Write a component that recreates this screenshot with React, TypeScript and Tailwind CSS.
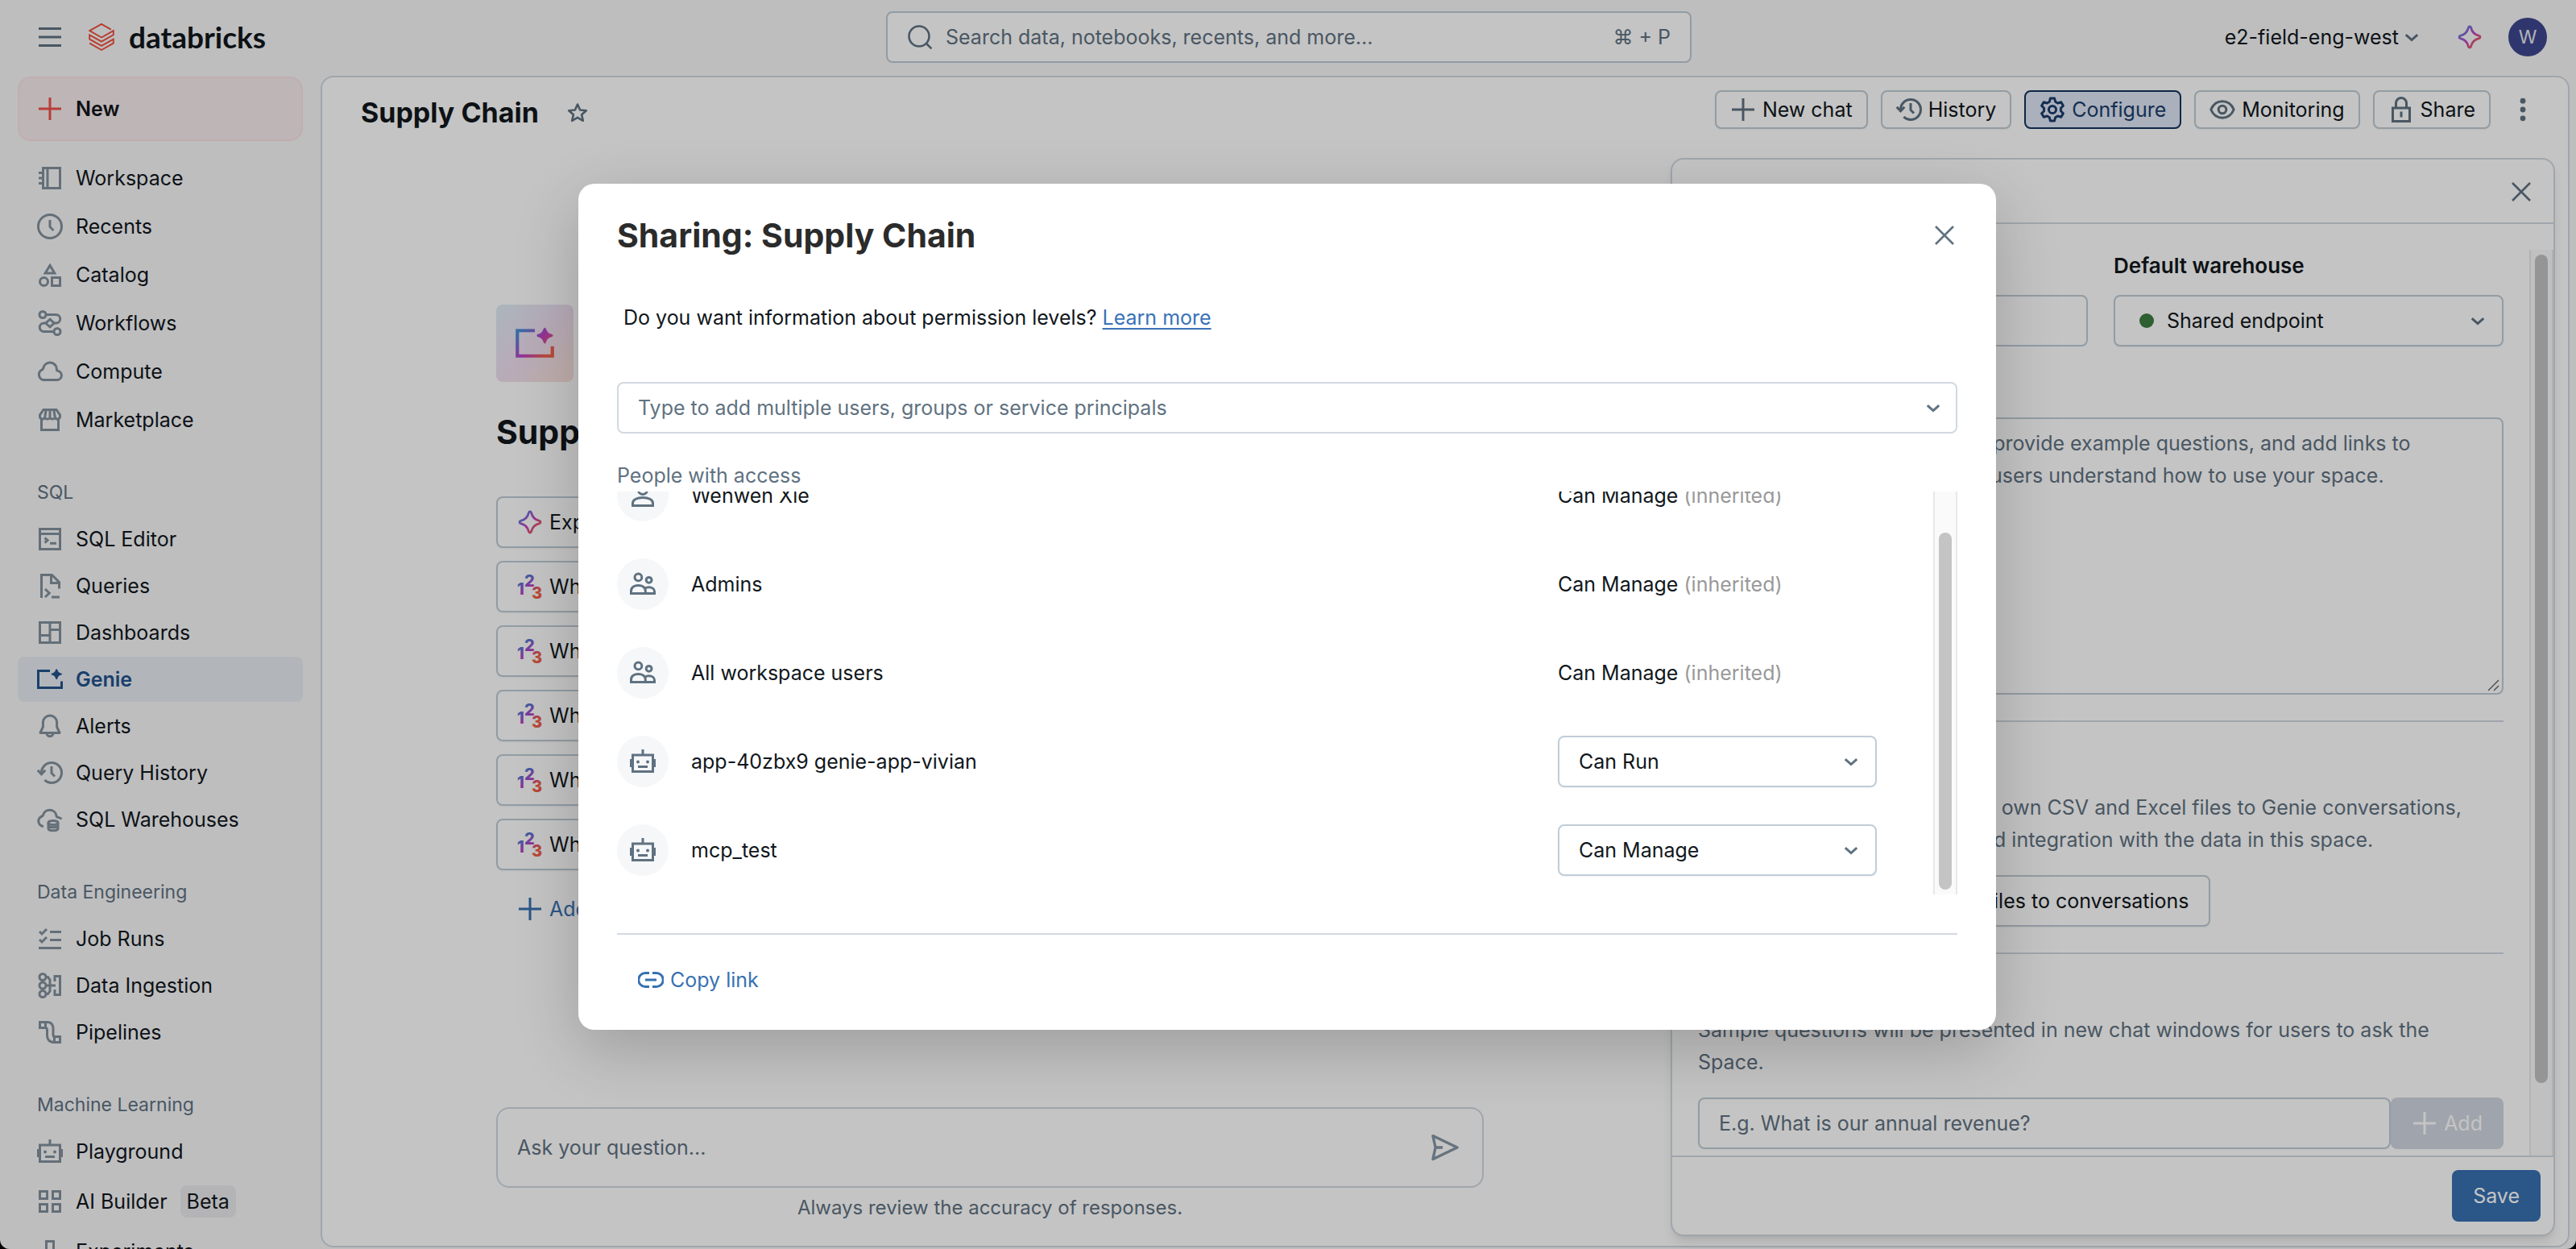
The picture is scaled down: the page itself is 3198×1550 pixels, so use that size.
import type { ReactNode } from "react";

/* ---------- icons ---------- */

function Icon({ children, className = "size-8" }: { children: ReactNode; className?: string }) {
  return (
    <svg viewBox="0 0 16 16" fill="none" stroke="currentColor" strokeWidth="1.5" className={`shrink-0 ${className}`} aria-hidden>
      {children}
    </svg>
  );
}

const icons = {
  menu: <path d="M1 2.75h14M1 8h14M1 13.25h14" />,
  plus: <path d="M8 1v14M1 8h14" />,
  close: <path d="M2.5 2.5l11 11M13.5 2.5l-11 11" strokeWidth="1.3" />,
  chevron: <path d="M4.4 6.6L8 9.8l3.6-3.2" strokeWidth="1.5" />,
  workspace: (
    <>
      <path d="M3.75 1.75h10.5v12.5H3.75zM6.5 1.75v12.5" />
      <path d="M1 4.75h2.75M1 8h2.75M1 11.25h2.75" />
    </>
  ),
  clock: (
    <>
      <circle cx="8" cy="8" r="7.25" />
      <path d="M8 4v4.25L10.25 10.5" />
    </>
  ),
  catalog: (
    <>
      <path d="M8 2.2L10.9 7H5.1z" />
      <circle cx="4.25" cy="12.25" r="2.5" />
      <path d="M9.25 9.75h5v5h-5z" />
    </>
  ),
  workflows: (
    <>
      <circle cx="3.5" cy="2.75" r="2" />
      <circle cx="12.5" cy="13.25" r="2" />
      <path d="M5.5 2.75h6.25a2.6 2.6 0 010 5.25H10.4M10.5 13.25H4.25a2.6 2.6 0 010-5.25h1.4" />
      <path d="M8 5.6L10.6 8 8 10.4 5.4 8z" />
    </>
  ),
  cloud: <path d="M3.8 13.25h8.6a2.85 2.85 0 00.3-5.68.6.6 0 01-.5-.6V6.4a4.2 4.2 0 00-8.3-.6c-.1.5-.4.9-.8 1.1a3.4 3.4 0 00.7 6.35z" />,
  market: (
    <>
      <path d="M2.75 7.5v6.75h10.5V7.5" />
      <path d="M4 1.75h8L14.25 5v1a1.6 1.6 0 01-3.1.5A1.7 1.7 0 018 6.5a1.7 1.7 0 01-3.15 0A1.6 1.6 0 011.75 6V5zM5.6 1.75L4.85 6.5M8 1.75V6.5M10.4 1.75l.75 4.75" />
    </>
  ),
  sqlEditor: (
    <>
      <path d="M1.75 1.75h12.5v12.5H1.75zM1.75 4.75h12.5" />
      <path d="M4.75 7.25l1.75 1.5-1.75 1.5M8 10.6h4" />
    </>
  ),
  queries: (
    <>
      <path d="M2.75 15.5V1.25h6.5l4.5 4.5v4M8.75 1.25v5h5" />
      <path d="M5 10l2.6 2.5L5 15M9 15h5" />
    </>
  ),
  dashboards: (
    <>
      <path d="M1.75 1.75h12.5v12.5H1.75zM8 1.75v12.5" />
      <path d="M1.75 9.75H8M8 6.25h6.25" />
    </>
  ),
  genie: (
    <>
      <path d="M8 2.75H.75v10.5h14.5v-4" />
      <path
        d="M12.1 1.6c.3 0 .45.2.55.5.35 1.2.9 1.75 2.1 2.1.3.1.75.2.75.6s-.45.5-.75.6c-1.2.35-1.75.9-2.1 2.1-.1.3-.25.6-.55.6s-.45-.3-.55-.6c-.35-1.2-.9-1.75-2.1-2.1-.3-.1-.65-.2-.65-.6s.35-.5.65-.6c1.2-.35 1.75-.9 2.1-2.1.1-.3.25-.5.55-.5z"
        fill="currentColor"
        stroke="none"
      />
    </>
  ),
  bell: (
    <>
      <path d="M8 1.5a4.3 4.3 0 00-4.3 4.3v2.7L2 12.2h12l-1.7-3.7V5.8A4.3 4.3 0 008 1.5z" strokeLinejoin="round" />
      <path d="M6 12.4a2 2 0 004 0" />
    </>
  ),
  history: (
    <>
      <path d="M2.75 8A6.25 6.25 0 119 14.25a6.2 6.2 0 01-4.3-1.75" />
      <path d="M.4 6.4L2.75 8.9l2.4-2.5M9 4v4.25l2 2" />
    </>
  ),
  warehouse: (
    <>
      <path d="M4 12.2A3.2 3.2 0 013 6c.4-.1.7-.4.8-.8a4.2 4.2 0 018.2.4c0 .6.3.9.9 1 .9.1 1.7.5 2.3 1.2" />
      <ellipse cx="10" cy="10" rx="3" ry="1.3" />
      <path d="M7 10v3.5c0 .8 1.3 1.4 3 1.4s3-.6 3-1.4V10M7 12c.4.5 1.6.9 3 .9s2.6-.4 3-.9" />
    </>
  ),
  jobs: (
    <>
      <path d="M8 3.75h7M8 8.75h7M1 13.75h14" />
      <path d="M1.5 3.5L3 5l3-3M1.5 8.5L3 10l3-3" />
    </>
  ),
  ingestion: (
    <>
      <circle cx="3.5" cy="2.75" r="2" />
      <circle cx="3.5" cy="8" r="2" />
      <circle cx="3.5" cy="13.25" r="2" />
      <path d="M5.5 2.75h1.25L8 4.5v7l-1.25 1.75H5.5M5.5 8h6M11 5.5V2.25h3.25v11.5H11V10.5" />
    </>
  ),
  pipelines: (
    <>
      <path d="M1.75 1.75h3.5v3.5h-3.5zM10.75 10.75h3.5v3.5h-3.5z" />
      <path d="M5.25 1.75H6.5c2.5 0 3.5 2 3.5 4v3.5c0 1 .2 1.5.75 1.5M5.25 5.25c.6 0 1 .5 1 1.5V10c0 2.5 1.5 4.25 4.5 4.25" />
    </>
  ),
  robot: (
    <>
      <path d="M1.75 4h12.5v10.25H1.75zM8 .5V4" />
      <path d="M.75 6.5v5M15.25 6.5v5M5 11.25h6" />
      <circle cx="5" cy="8.2" r="1" fill="currentColor" stroke="none" />
      <circle cx="11" cy="8.2" r="1" fill="currentColor" stroke="none" />
    </>
  ),
  grid: <path d="M1.75 1.75h4.5v4.5h-4.5zM9.75 1.75h4.5v4.5h-4.5zM1.75 9.75h4.5v4.5h-4.5zM9.75 9.75h4.5v4.5h-4.5z" />,
  beaker: <path d="M5.75 1.75h4.5v5l4 7.5H1.75l4-7.5z" />,
  search: (
    <>
      <circle cx="7.5" cy="7.5" r="6.25" strokeWidth="1.3" />
      <path d="M12 12l3.2 3.2" strokeWidth="1.3" />
    </>
  ),
  star: <path d="M8 2l1.8 4 4.4.4-3.3 2.9 1 4.3L8 11.3l-3.9 2.3 1-4.3-3.3-2.9L6.2 6z" strokeLinejoin="round" />,
  gear: (
    <>
      <path
        d="M6.7 1h2.6l.5 2.1 1.5.9 2.1-.6 1.3 2.2-1.5 1.5v1.8l1.5 1.5-1.3 2.2-2.1-.6-1.5.9-.5 2.1H6.7l-.5-2.1-1.5-.9-2.1.6-1.3-2.2 1.5-1.5V7.1L1.3 5.6l1.3-2.2 2.1.6 1.5-.9z"
        strokeLinejoin="round"
      />
      <circle cx="8" cy="8" r="2.3" />
    </>
  ),
  eye: (
    <>
      <path d="M.9 8C2.3 4.7 5 2.9 8 2.9S13.7 4.7 15.1 8C13.7 11.3 11 13.1 8 13.1S2.3 11.3.9 8z" strokeLinejoin="round" />
      <circle cx="8" cy="8" r="2.4" />
    </>
  ),
  lock: (
    <>
      <path d="M2.75 7h10.5v8.25H2.75zM4.75 7V4a3.25 3.25 0 016.5 0v3" />
      <path d="M8 9.25v3.5" />
    </>
  ),
  kebab: (
    <g fill="currentColor" stroke="none">
      <circle cx="8" cy="2.6" r="1.7" />
      <circle cx="8" cy="8" r="1.7" />
      <circle cx="8" cy="13.4" r="1.7" />
    </g>
  ),
  send: <path d="M1.3 1.6L14.7 8 1.3 14.4 2.7 8zM2.7 8h4" strokeLinejoin="round" strokeWidth="1.5" />,
  link: (
    <>
      <path d="M7 3.75H4.6a4.25 4.25 0 000 8.5H7M9 3.75h2.4a4.25 4.25 0 010 8.5H9" />
      <path d="M4.5 8h7" />
    </>
  ),
  user: (
    <>
      <circle cx="8" cy="4.5" r="2.75" />
      <path d="M1.75 14.25v-1.5C1.75 10.5 4.6 9.2 8 9.2s6.25 1.3 6.25 3.55v1.5z" />
    </>
  ),
  users: (
    <>
      <circle cx="5.2" cy="3.7" r="2.2" />
      <circle cx="11.8" cy="5.4" r="1.7" />
      <path d="M.75 13.75v-1.5C.75 10 2.7 8.7 5.2 8.7s4.45 1.3 4.45 3.55v1.5zM9.5 13.75h5.75v-1.2c0-1.7-1.6-2.7-3.45-2.7-1 0-1.9.3-2.5.8" />
    </>
  ),
};

type IconName = keyof typeof icons;

function Gradients() {
  return (
    <svg width="0" height="0" className="absolute" aria-hidden>
      <defs>
        <linearGradient id="ai16" gradientUnits="userSpaceOnUse" x1="1" y1="1" x2="15" y2="15">
          <stop offset="0.1" stopColor="#4a90d9" />
          <stop offset="0.5" stopColor="#c042c8" />
          <stop offset="0.85" stopColor="#f0604a" />
        </linearGradient>
        <linearGradient id="ai32" gradientUnits="userSpaceOnUse" x1="4" y1="2" x2="28" y2="30">
          <stop offset="0.15" stopColor="#4a7fd0" />
          <stop offset="0.5" stopColor="#b83fc8" />
          <stop offset="0.75" stopColor="#f0604a" />
        </linearGradient>
      </defs>
    </svg>
  );
}

function Sparkle({ className = "size-8" }: { className?: string }) {
  return (
    <svg viewBox="0 0 16 16" fill="none" stroke="url(#ai16)" strokeWidth="1.4" strokeLinejoin="round" className={`shrink-0 ${className}`} aria-hidden>
      <path d="M8 1.5c.5 0 .7.3.8.7.7 2.9 2.1 4.3 5 5 .4.1.7.3.7.8s-.3.7-.7.8c-2.9.7-4.3 2.1-5 5-.1.4-.3.7-.8.7s-.7-.3-.8-.7c-.7-2.9-2.1-4.3-5-5-.4-.1-.7-.3-.7-.8s.3-.7.7-.8c2.9-.7 4.3-2.1 5-5 .1-.4.3-.7.8-.7z" />
    </svg>
  );
}

function Numbers() {
  return (
    <svg viewBox="0 0 32 32" fill="url(#ai32)" className="size-8 shrink-0 overflow-visible font-['Inter',sans-serif] text-[20px] font-extrabold" aria-hidden>
      <text x="0" y="26">1</text>
      <text x="9" y="16">2</text>
      <text x="18" y="31">3</text>
    </svg>
  );
}

function Logo() {
  return (
    <svg viewBox="0 0 32 35" fill="none" stroke="#ef4d3a" strokeWidth="1.9" className="h-9 w-8 shrink-0" aria-hidden>
      <path d="M1.2 25.2L16 33.5l14.8-8.3v-5.1L16 28.4 1.2 20.1v-5.3L16 23.1l14.8-8.3V9.7L16 18 1.2 9.7 16 1.4l11.8 6.7" />
    </svg>
  );
}

/* ---------- sidebar ---------- */

type NavEntry = { label: string; icon: IconName; active?: boolean; badge?: string };

const topNav: NavEntry[] = [
  { label: "Workspace", icon: "workspace" },
  { label: "Recents", icon: "clock" },
  { label: "Catalog", icon: "catalog" },
  { label: "Workflows", icon: "workflows" },
  { label: "Compute", icon: "cloud" },
  { label: "Marketplace", icon: "market" },
];

const sections: { title: string; items: NavEntry[] }[] = [
  {
    title: "SQL",
    items: [
      { label: "SQL Editor", icon: "sqlEditor" },
      { label: "Queries", icon: "queries" },
      { label: "Dashboards", icon: "dashboards" },
      { label: "Genie", icon: "genie", active: true },
      { label: "Alerts", icon: "bell" },
      { label: "Query History", icon: "history" },
      { label: "SQL Warehouses", icon: "warehouse" },
    ],
  },
  {
    title: "Data Engineering",
    items: [
      { label: "Job Runs", icon: "jobs" },
      { label: "Data Ingestion", icon: "ingestion" },
      { label: "Pipelines", icon: "pipelines" },
    ],
  },
  {
    title: "Machine Learning",
    items: [
      { label: "Playground", icon: "robot" },
      { label: "AI Builder", icon: "grid", badge: "Beta" },
      { label: "Experiments", icon: "beaker" },
    ],
  },
];

function NavLink({ entry }: { entry: NavEntry }) {
  return (
    <a
      href="#"
      className={`flex shrink-0 items-center gap-4 rounded-lg pl-6 ${entry.badge ? "h-16" : "h-14"} ${
        entry.active ? "bg-[#e8edf4] font-semibold text-[#23528c]" : ""
      }`}
    >
      <Icon className={entry.active ? "size-8" : "size-8 text-[#83919c]"}>{icons[entry.icon]}</Icon>
      <span>{entry.label}</span>
      {entry.badge && <span className="rounded-lg bg-[#ebebed] px-2 py-1 leading-8">{entry.badge}</span>}
    </a>
  );
}

function Sidebar() {
  return (
    <nav className="flex w-[398px] shrink-0 flex-col overflow-hidden px-[22px] pt-px" aria-label="Primary">
      <button className="flex h-20 shrink-0 items-center gap-4 rounded-2xl border-2 border-[#fae3e4] bg-[#f8eced] pl-[22px] font-semibold">
        <Icon className="size-8 text-[#f0504a]">{icons.plus}</Icon>
        New
      </button>
      <div className="mt-[18px] flex shrink-0 flex-col gap-1">
        {topNav.map((e) => (
          <NavLink key={e.label} entry={e} />
        ))}
      </div>
      {sections.map((s) => (
        <section key={s.title} className="mt-8 flex shrink-0 flex-col">
          <h2 className="flex h-15 items-center pl-6 text-[23px] text-[#5f7281]">{s.title}</h2>
          <div className="flex flex-col gap-0.5">
            {s.items.map((e) => (
              <NavLink key={e.label} entry={e} />
            ))}
          </div>
        </section>
      ))}
    </nav>
  );
}

/* ---------- top bar ---------- */

function TopBar() {
  return (
    <header className="grid h-[94px] shrink-0 grid-cols-[1fr_1000px_1fr] items-center pb-0.5 pl-0.5">
      <div className="flex items-center gap-8 pl-11">
        <button aria-label="Toggle navigation">
          <Icon className="size-8 text-[#5f7281]">{icons.menu}</Icon>
        </button>
        <a href="#" className="flex items-center gap-[18px] font-['Lato',sans-serif] text-[37px] leading-10 font-bold">
          <Logo />
          databricks
        </a>
      </div>
      <label className="flex h-16 items-center gap-4 rounded-lg border-2 border-[#bfccd6] bg-white px-6 text-[#5f7281]">
        <Icon>{icons.search}</Icon>
        <input
          type="search"
          aria-label="Search"
          placeholder="Search data, notebooks, recents, and more..."
          className="min-w-0 flex-1 bg-transparent outline-none placeholder:text-[#5f7281]"
        />
        <kbd className="font-['Inter','DejaVu_Sans',sans-serif]">⌘ + P</kbd>
      </label>
      <div className="flex items-center justify-end pr-9">
        <button className="flex items-center">
          e2-field-eng-west
          <Icon className="size-8 text-[#5f7281]">{icons.chevron}</Icon>
        </button>
        <button aria-label="Assistant" className="ml-10">
          <Sparkle />
        </button>
        <button className="ml-8 size-12 rounded-full bg-[#3e478e] text-[23px] text-[#e8e8f0]">W</button>
      </div>
    </header>
  );
}

/* ---------- Genie space ---------- */

const toolbar: { label: string; icon: IconName; active?: boolean }[] = [
  { label: "New chat", icon: "plus" },
  { label: "History", icon: "history" },
  { label: "Configure", icon: "gear", active: true },
  { label: "Monitoring", icon: "eye" },
  { label: "Share", icon: "lock" },
];

function SpaceHeader() {
  return (
    <div className="flex h-[100px] shrink-0 justify-between pt-4 pr-8 pl-12">
      <div className="flex h-14 items-center gap-[34px]">
        <h1 className="text-[34px] font-bold">Supply Chain</h1>
        <button aria-label="Add to favorites">
          <Icon className="size-7 text-[#5f7281]">{icons.star}</Icon>
        </button>
      </div>
      <div className="flex gap-4">
        {toolbar.map((b) => (
          <button
            key={b.label}
            className={`flex h-12 items-center gap-2 rounded-lg border-2 px-[17px] ${
              b.active ? "border-[#13335c] bg-[#dde6f5] text-[#1b3d6a]" : "border-[#bfccd6] bg-white shadow-xs"
            }`}
          >
            <Icon className={b.active ? "size-8" : "size-8 text-[#5f7281]"}>{icons[b.icon]}</Icon>
            {b.label}
          </button>
        ))}
        <button aria-label="More actions" className="flex h-12 w-12 items-center justify-center">
          <Icon className="size-8 text-[#5f7281]">{icons.kebab}</Icon>
        </button>
      </div>
    </div>
  );
}

const suggestions = [
  "Explain the data set",
  "What is the total inventory by plant?",
  "What are the top products by demand?",
  "What is the average lead time by supplier?",
  "What is the shipping cost by region?",
  "What orders are delayed this week?",
];

function ChatArea() {
  return (
    <div className="mx-auto flex w-full max-w-[1226px] flex-col pt-[182px]">
      <div className="flex size-24 items-center justify-center rounded-lg bg-linear-to-br from-[#dfecf5] via-[#efdff0] to-[#fbe2da]">
        <svg viewBox="0 0 16 16" fill="none" stroke="url(#ai16)" strokeWidth="1.4" className="size-12 [&>path:last-child]:fill-[url(#ai16)]" aria-hidden>
          {icons.genie.props.children}
        </svg>
      </div>
      <h2 className="mt-8 text-[41px] leading-[60px] font-bold">Supply Chain</h2>
      <div className="mt-[50px] flex flex-col items-start gap-4">
        {suggestions.map((s, i) => (
          <button key={s} className="flex h-16 items-center gap-2 rounded-lg border-2 border-[#bfccd6] px-6 shadow-xs">
            {i === 0 ? <Sparkle /> : <Numbers />}
            {s}
          </button>
        ))}
        <button className="flex h-16 items-center gap-2 px-[26px] text-[#3771b1]">
          <Icon>{icons.plus}</Icon>
          Add a question
        </button>
      </div>
      <div className="mt-auto flex h-[100px] shrink-0 items-center rounded-2xl border-2 border-[#d1d9e1] pr-7 pl-6">
        <input
          aria-label="Ask your question"
          placeholder="Ask your question..."
          className="min-w-0 flex-1 bg-transparent outline-none placeholder:text-[#5f7281]"
        />
        <button aria-label="Send">
          <Icon className="size-9 text-[#8796a5]">{icons.send}</Icon>
        </button>
      </div>
      <p className="mt-2.5 mb-8 text-center text-[24px] leading-[30px] text-[#5f7281]">Always review the accuracy of responses.</p>
    </div>
  );
}

/* ---------- configuration panel ---------- */

const field = "h-16 w-full rounded-lg border-2 border-[#bfccd6] bg-white px-6 outline-none placeholder:text-[#5f7281]";

function ConfigPanel() {
  return (
    <aside className="mr-4 mb-3 flex w-[1098px] shrink-0 flex-col overflow-hidden rounded-2xl border-2 border-[#d1d9e1] bg-white shadow-lg">
      <div className="flex h-20 shrink-0 items-center justify-between border-b-2 border-[#d1d9e1] pt-0.5 pr-6 pl-8">
        <h2 className="pt-2 text-[26px] font-semibold">Settings</h2>
        <button aria-label="Close settings">
          <Icon className="size-8 text-[#5f7281]">{icons.close}</Icon>
        </button>
      </div>
      <div className="mt-8 flex min-h-0 flex-1">
        <div className="flex min-w-0 flex-1 flex-col overflow-hidden px-8">
          <div className="grid shrink-0 grid-cols-2 gap-8">
            <div>
              <label htmlFor="title" className="block text-[26px] leading-10 font-semibold">Title</label>
              <input id="title" defaultValue="Supply Chain" className={`mt-4 ${field}`} />
            </div>
            <div>
              <label htmlFor="warehouse" className="block text-[26px] leading-10 font-semibold">Default warehouse</label>
              <div className="relative mt-4">
                <select id="warehouse" className="h-16 w-full appearance-none rounded-lg border-2 border-[#bfccd6] bg-white pl-16 shadow-xs outline-none">
                  <option>Shared endpoint</option>
                </select>
                <span className="absolute top-[23px] left-8 size-[18px] rounded-full bg-[#3c7d41]" />
                <Icon className="pointer-events-none absolute top-4 right-4 size-8 text-[#5f7281]">{icons.chevron}</Icon>
              </div>
            </div>
          </div>
          <label htmlFor="description" className="mt-8 block shrink-0 text-[26px] leading-10 font-semibold">Description</label>
          <div className="relative mt-4 h-[344px] shrink-0">
            <textarea
              id="description"
              placeholder={"Give an overview of all data, provide example questions, and add links to\ndocumentation to help most users understand how to use your space."}
              className="block h-full w-full resize-none rounded-lg border-2 border-[#bfccd6] px-6 py-2.5 leading-10 outline-none placeholder:text-[#5f7281]"
            />
            <svg viewBox="0 0 16 16" className="absolute right-1 bottom-1 size-4" stroke="#6b6b6b" strokeWidth="1.5" aria-hidden>
              <path d="M1 15L14 2M8 15l6-6" />
            </svg>
          </div>
          <hr className="mt-8 shrink-0 border-t-2 border-[#d1d9e1]" />
          <h3 className="mt-8 shrink-0 text-[26px] leading-10 font-semibold">File uploads</h3>
          <p className="mt-3.5 shrink-0 leading-10 whitespace-pre text-[#5f7281]">
            {"Let users upload and view their own CSV and Excel files to Genie conversations,\nfor any ad hoc data analysis and integration with the data in this space."}
          </p>
          <button className="mt-6 h-16 shrink-0 self-start rounded-lg border-2 border-[#bfccd6] px-6 shadow-xs">
            Allow users to try or upload files to conversations
          </button>
          <hr className="mt-8 shrink-0 border-t-2 border-[#d1d9e1]" />
          <h3 className="mt-6 shrink-0 text-[26px] leading-10 font-semibold">Sample questions</h3>
          <p className="mt-2.5 shrink-0 leading-10 text-[#5f7281]">
            Sample questions will be presented in new chat windows for users to ask the
            <br />
            Space.
          </p>
          <div className="mt-6 flex shrink-0">
            <input aria-label="Sample question" placeholder="E.g. What is our annual revenue?" className={field} />
            <button disabled className="flex h-16 shrink-0 items-center gap-2 rounded-lg bg-[#d1d6e0] px-[26px] text-white">
              <Icon>{icons.plus}</Icon>
              Add
            </button>
          </div>
        </div>
        <div className="w-[30px] shrink-0 border-x-2 border-[#e8e8e8] bg-[#fafafa] pt-1.5">
          <div className="mx-auto h-[1028px] w-4 rounded-full bg-[#c2c2c2]" />
        </div>
      </div>
      <div className="flex h-[98px] shrink-0 justify-end border-t-2 border-[#d1d9e1] pt-4 pr-4">
        <button className="h-16 rounded-lg bg-[#3771b1] px-[26px] text-white">Save</button>
      </div>
    </aside>
  );
}

/* ---------- sharing dialog ---------- */

type Member = { name: string; icon: IconName; level: string; editable?: boolean };

const members: Member[] = [
  { name: "Wenwen Xie", icon: "user", level: "Can Manage" },
  { name: "Admins", icon: "users", level: "Can Manage" },
  { name: "All workspace users", icon: "users", level: "Can Manage" },
  { name: "app-40zbx9 genie-app-vivian", icon: "robot", level: "Can Run", editable: true },
  { name: "mcp_test", icon: "robot", level: "Can Manage", editable: true },
];

function MemberRow({ m }: { m: Member }) {
  return (
    <li className="flex h-[110px] shrink-0 items-center">
      <span className="flex size-16 shrink-0 items-center justify-center rounded-full bg-[#f6f7f9] text-[#5f7281]">
        <Icon>{icons[m.icon]}</Icon>
      </span>
      <span className="ml-7 flex-1">{m.name}</span>
      <div className="mr-[70px] w-[396px]">
        {m.editable ? (
          <div className="relative">
            <select
              aria-label={`Permission for ${m.name}`}
              defaultValue={m.level}
              className="h-16 w-full appearance-none rounded-lg border-2 border-[#c0cdd8] bg-white pl-6 shadow-xs outline-none"
            >
              <option>Can Manage</option>
              <option>Can Edit</option>
              <option>Can Run</option>
              <option>Can View</option>
            </select>
            <Icon className="pointer-events-none absolute top-4 right-4 size-8 text-[#5f7281]">{icons.chevron}</Icon>
          </div>
        ) : (
          <p>
            {m.level} <span className="text-[#999999]">(inherited)</span>
          </p>
        )}
      </div>
    </li>
  );
}

function SharingDialog() {
  return (
    <div className="absolute inset-0 flex items-start justify-center bg-black/23 pt-[228px] pr-0.5">
      <div
        role="dialog"
        aria-modal="true"
        aria-labelledby="sharing-title"
        className="flex w-[1760px] flex-col rounded-[20px] bg-white px-12 pt-8 pb-[30px] shadow-[0_24px_80px_rgba(0,0,0,0.2)]"
      >
        <div className="flex h-16 items-center justify-between">
          <h2 id="sharing-title" className="text-[41px] font-bold text-[#2b2b2b]">
            Sharing: Supply Chain
          </h2>
          <button aria-label="Close">
            <Icon className="size-8 text-[#5f7281]">{icons.close}</Icon>
          </button>
        </div>
        <p className="mt-[50px] ml-2 leading-10">
          Do you want information about permission levels?{" "}
          <a href="#" className="text-[#3a72b8] underline decoration-2 underline-offset-4">
            Learn more
          </a>
        </p>
        <div className="relative mt-15">
          <input
            role="combobox"
            aria-expanded="false"
            aria-label="Add users, groups or service principals"
            placeholder="Type to add multiple users, groups or service principals"
            className="h-16 w-full rounded-lg border-2 border-[#d1d9e1] px-6 outline-none placeholder:text-[#5f7281]"
          />
          <Icon className="pointer-events-none absolute top-4 right-3.5 size-8 text-[#5f7281]">{icons.chevron}</Icon>
        </div>
        <h3 className="mt-8 leading-10 text-[#5f7281]">People with access</h3>
        <div className="flex h-[500px]">
          <ul className="flex min-w-0 flex-1 flex-col justify-end overflow-hidden">
            {members.map((m) => (
              <MemberRow key={m.name} m={m} />
            ))}
          </ul>
          <div className="w-[30px] shrink-0 border-x-2 border-[#e8e8e8] bg-[#fafafa] pt-[51px]">
            <div className="mx-auto h-[443px] w-4 rounded-full bg-[#c4c4c4]" />
          </div>
        </div>
        <hr className="mt-12 border-t-2 border-[#d1d9e1]" />
        <button className="mt-6 flex h-16 items-center gap-2 self-start px-[26px] text-[#3771b1]">
          <Icon>{icons.link}</Icon>
          Copy link
        </button>
      </div>
    </div>
  );
}

export default function App() {
  return (
    <div className="h-screen w-full bg-black">
      <div className="relative flex h-full w-full flex-col overflow-hidden rounded-b-xl bg-[#f7f7f9] font-['Inter',sans-serif] text-[25px] leading-8 text-[#11171c]">
        <Gradients />
        <TopBar />
        <div className="flex min-h-0 flex-1">
          <Sidebar />
          <main className="mr-2 mb-0.5 flex min-w-0 flex-1 flex-col rounded-2xl border-2 border-[#d1d9e1] bg-white">
            <SpaceHeader />
            <div className="flex min-h-0 flex-1 gap-4">
              <ChatArea />
              <ConfigPanel />
            </div>
          </main>
        </div>
        <SharingDialog />
      </div>
    </div>
  );
}
